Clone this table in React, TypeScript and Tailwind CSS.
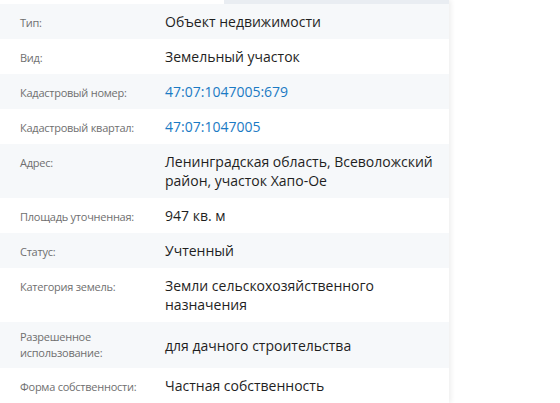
type Row = {
  label: string
  value: string
  link?: boolean
  center?: boolean
}

const rows: Row[] = [
  { label: 'Тип:', value: 'Объект недвижимости' },
  { label: 'Вид:', value: 'Земельный участок' },
  { label: 'Кадастровый номер:', value: '47:07:1047005:679', link: true },
  { label: 'Кадастровый квартал:', value: '47:07:1047005', link: true },
  { label: 'Адрес:', value: 'Ленинградская область, Всеволожский район, участок Хапо-Ое' },
  { label: 'Площадь уточненная:', value: '947 кв. м' },
  { label: 'Статус:', value: 'Учтенный' },
  { label: 'Категория земель:', value: 'Земли сельскохозяйственного назначения' },
  { label: 'Разрешенное использование:', value: 'для дачного строительства', center: true },
  { label: 'Форма собственности:', value: 'Частная собственность' },
]

export default function App() {
  return (
    <div
      className="w-[560px] h-[403px] overflow-hidden bg-white"
      style={{ fontFamily: '"Open Sans", "Noto Sans", sans-serif' }}
    >
      <div className="w-[449px] h-full bg-white shadow-[2px_0_5px_rgba(0,0,0,0.07)]">
        <div className="flex h-1">
          <div className="w-[224px]" />
          <div className="flex-1 bg-[#e9edf2]" />
        </div>
        {rows.map((r, i) => (
          <div
            key={r.label}
            className={`flex ${r.center ? 'items-center py-[7px]' : 'items-baseline py-2'} ${
              i % 2 === 0 ? 'bg-[#f6f8fa]' : 'bg-white'
            }`}
          >
            <div className="w-[165px] shrink-0 pl-5 pr-2 text-[11px] tracking-[-0.25px] leading-4 text-[#6f6f6f]">
              {r.label}
            </div>
            <div
              className={`pr-3 text-[14px] leading-[19px] ${
                r.link ? 'text-[#1b7ac4]' : 'text-[#1f1f1f]'
              }`}
            >
              {r.value}
            </div>
          </div>
        ))}
      </div>
    </div>
  )
}
